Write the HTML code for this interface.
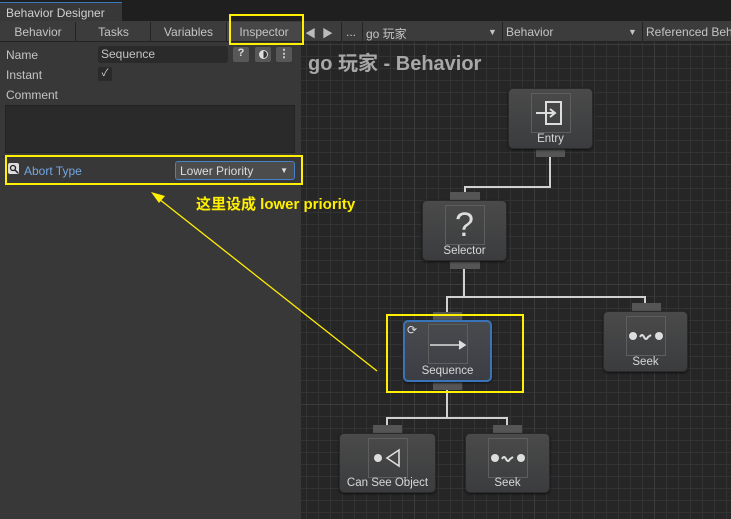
<!DOCTYPE html><html><head><meta charset="utf-8"><style>
*{margin:0;padding:0;box-sizing:border-box}
body{width:731px;height:519px;overflow:hidden;background:#1f1f1f;font-family:"Liberation Sans","Noto Sans CJK SC",sans-serif;font-size:12px;color:#c4c4c4;position:relative}
.a{position:absolute}
.grid{left:301px;top:42px;width:430px;height:477px;background-color:#262626;
background-image:linear-gradient(#3c3c3c 1px,transparent 1px),linear-gradient(90deg,#3c3c3c 1px,transparent 1px),linear-gradient(#333 1px,transparent 1px),linear-gradient(90deg,#333 1px,transparent 1px);
background-size:120px 120px,120px 120px,12px 12px,12px 12px;background-position:-7px 2px,-7px 2px,-7px 2px,-7px 2px}
.node{position:absolute;border-radius:5px;background:linear-gradient(#4a4a4a,#3b3c3e);border:1px solid #2a2a2a;box-shadow:0 1px 2px #111}
.node .ib{position:absolute;left:50%;top:4px;width:40px;height:40px;margin-left:-20px;border:1px solid #5e5e5e}
.node .lb{position:absolute;left:0;right:0;bottom:3px;text-align:center;font-size:11.5px;color:#d8d8d8}
.tab{position:absolute;background:#555;height:8px}
.ln{position:absolute;background:#d0d0d0}
.yb{position:absolute;border:2px solid #ffef00}
</style></head><body>
<div class="a" style="left:0;top:0;width:731px;height:21px;background:#1f1f1f"></div>
<div class="a" style="left:0;top:2px;width:122px;height:19px;background:#383838;border-top:1px solid #3a79bb;padding:3px 6px;font-size:12px;color:#d0d0d0">Behavior Designer</div>
<div class="a" style="left:0;top:21px;width:301px;height:498px;background:#383838"></div>
<div class="a" style="left:0;top:21px;width:731px;height:21px;background:#3c3c3c;border-bottom:1px solid #232323"></div>
<div class="a" style="left:0;top:25px;width:76px;text-align:center">Behavior</div>
<div class="a" style="left:75px;top:22px;width:1px;height:19px;background:#232323"></div>
<div class="a" style="left:76px;top:25px;width:75px;text-align:center">Tasks</div>
<div class="a" style="left:150px;top:22px;width:1px;height:19px;background:#232323"></div>
<div class="a" style="left:151px;top:25px;width:75px;text-align:center">Variables</div>
<div class="a" style="left:226px;top:22px;width:1px;height:19px;background:#232323"></div>
<div class="a" style="left:227px;top:22px;width:74px;height:19px;background:#474747;text-align:center;padding-top:3px">Inspector</div>
<div class="a" style="left:305px;top:25px;font-size:11px;color:#bbb">◀</div>
<div class="a" style="left:322px;top:25px;font-size:11px;color:#bbb">▶</div>
<div class="a" style="left:341px;top:22px;width:1px;height:19px;background:#232323"></div>
<div class="a" style="left:346px;top:25px">...</div>
<div class="a" style="left:362px;top:22px;width:1px;height:19px;background:#232323"></div>
<div class="a" style="left:366px;top:25px">go 玩家</div>
<div class="a" style="left:488px;top:27px;font-size:9px">▼</div>
<div class="a" style="left:502px;top:22px;width:1px;height:19px;background:#232323"></div>
<div class="a" style="left:506px;top:25px">Behavior</div>
<div class="a" style="left:628px;top:27px;font-size:9px">▼</div>
<div class="a" style="left:642px;top:22px;width:1px;height:19px;background:#232323"></div>
<div class="a" style="left:646px;top:25px;white-space:nowrap">Referenced Behavior</div>

<div class="a" style="left:6px;top:48px">Name</div>
<div class="a" style="left:98px;top:46px;width:130px;height:17px;background:#2a2a2a;border-radius:3px;padding:1px 3px">Sequence</div>
<div class="a" style="left:233px;top:47px;width:16px;height:15px;background:#585858;border-radius:2px;text-align:center;font-weight:bold;color:#ddd;font-size:11px">?</div>
<div class="a" style="left:255px;top:47px;width:16px;height:15px;background:#585858;border-radius:2px"><div style="margin:3px auto;width:9px;height:9px;border-radius:50%;background:linear-gradient(90deg,#ddd 50%,#333 50%);border:1px solid #ddd"></div></div>
<div class="a" style="left:276px;top:47px;width:16px;height:15px;background:#585858;border-radius:2px;text-align:center;font-weight:bold;color:#ddd;font-size:11px">⋮</div>
<div class="a" style="left:6px;top:68px">Instant</div>
<div class="a" style="left:98px;top:67px;width:14px;height:14px;background:#2a2a2a;border-radius:2px;font-size:10px;text-align:center;color:#ddd;line-height:14px">✓</div>
<div class="a" style="left:6px;top:88px">Comment</div>
<div class="a" style="left:5px;top:105px;width:290px;height:48px;background:#2a2a2a;border:1px solid #222"></div>
<div class="a" style="left:2px;top:156px;width:296px;height:1px;background:#2a2a2a"></div>
<div class="a" style="left:8px;top:163px;width:11px;height:11px;background:#ddd;border-radius:2px"><svg width="11" height="11"><circle cx="5" cy="5" r="2.5" fill="none" stroke="#222" stroke-width="1.3"/><path d="M7 7l3 3" stroke="#222" stroke-width="1.5"/></svg></div>
<div class="a" style="left:24px;top:164px;color:#74a5e2">Abort Type</div>
<div class="a" style="left:175px;top:161px;width:120px;height:19px;background:#4c4c4c;border:1px solid #4a80c4;border-radius:3px;padding:2px 4px;color:#ddd">Lower Priority<span style="position:absolute;right:6px;top:4px;font-size:8px">▼</span></div>

<div class="a grid"></div>
<div class="a" style="left:308px;top:47px;font-size:20px;font-weight:bold;color:#a8a8a8">go 玩家 - Behavior</div>

<div class="ln" style="left:549px;top:157px;width:2px;height:30px"></div>
<div class="ln" style="left:464px;top:186px;width:87px;height:2px"></div>
<div class="ln" style="left:464px;top:186px;width:2px;height:7px"></div>
<div class="ln" style="left:463px;top:269px;width:2px;height:29px"></div>
<div class="ln" style="left:446px;top:296px;width:200px;height:2px"></div>
<div class="ln" style="left:446px;top:296px;width:2px;height:17px"></div>
<div class="ln" style="left:644px;top:296px;width:2px;height:8px"></div>
<div class="ln" style="left:446px;top:390px;width:2px;height:29px"></div>
<div class="ln" style="left:386px;top:417px;width:122px;height:2px"></div>
<div class="ln" style="left:386px;top:417px;width:2px;height:8px"></div>
<div class="ln" style="left:506px;top:417px;width:2px;height:8px"></div>

<div class="tab" style="left:536px;top:149px;width:29px"></div>
<div class="node" style="left:508px;top:88px;width:85px;height:61px"><div class="ib"><svg width="38" height="38"><rect x="14" y="8" width="15" height="22" fill="none" stroke="#ddd" stroke-width="2"/><path d="M4 19H23M18 15l5 4-5 4" fill="none" stroke="#ddd" stroke-width="2"/></svg></div><div class="lb">Entry</div></div>
<div class="tab" style="left:450px;top:192px;width:30px"></div>
<div class="tab" style="left:450px;top:261px;width:30px"></div>
<div class="node" style="left:422px;top:200px;width:85px;height:61px"><div class="ib" style="text-align:center;font-size:34px;line-height:38px;color:#ddd">?</div><div class="lb">Selector</div></div>
<div class="tab" style="left:433px;top:312px;width:29px"></div>
<div class="tab" style="left:433px;top:382px;width:29px"></div>
<div class="node" style="left:403px;top:320px;width:89px;height:62px;border:2px solid #3a74b8;background:linear-gradient(#484a4e,#3b3e44)"><div class="ib" style="top:2px"><svg width="38" height="38"><path d="M1 20H36M30 16l6 4-6 4" fill="#ddd" stroke="#ddd" stroke-width="1.5"/></svg></div><div class="lb" style="bottom:3px">Sequence</div><div style="position:absolute;left:2px;top:1px;font-size:12px;color:#ddd">⟳</div></div>
<div class="tab" style="left:632px;top:303px;width:29px"></div>
<div class="node" style="left:603px;top:311px;width:85px;height:61px"><div class="ib"><svg width="38" height="38"><circle cx="6" cy="19" r="4" fill="#ddd"/><circle cx="32" cy="19" r="4" fill="#ddd"/><path d="M13 20q2-4 4 0t4 0l3-2" fill="none" stroke="#ddd" stroke-width="2"/></svg></div><div class="lb">Seek</div></div>
<div class="tab" style="left:373px;top:425px;width:29px"></div>
<div class="node" style="left:339px;top:433px;width:97px;height:60px"><div class="ib"><svg width="38" height="38"><circle cx="9" cy="19" r="4" fill="#ddd"/><path d="M30 11L18 19L30 27Z" fill="none" stroke="#ddd" stroke-width="1.6"/></svg></div><div class="lb">Can See Object</div></div>
<div class="tab" style="left:493px;top:425px;width:29px"></div>
<div class="node" style="left:465px;top:433px;width:85px;height:60px"><div class="ib"><svg width="38" height="38"><circle cx="6" cy="19" r="4" fill="#ddd"/><circle cx="32" cy="19" r="4" fill="#ddd"/><path d="M13 20q2-4 4 0t4 0l3-2" fill="none" stroke="#ddd" stroke-width="2"/></svg></div><div class="lb">Seek</div></div>

<div class="yb" style="left:229px;top:14px;width:75px;height:31px"></div>
<div class="yb" style="left:5px;top:155px;width:298px;height:30px"></div>
<div class="yb" style="left:386px;top:314px;width:138px;height:79px"></div>
<div class="a" style="left:196px;top:193px;font-size:15px;font-weight:bold;color:#ffef00;white-space:nowrap">这里设成 lower priority</div>
<svg class="a" style="left:0;top:0" width="731" height="519"><path d="M377 371L154 195" stroke="#ffef00" stroke-width="1.3"/><path d="M151 192l14 4-6 7z" fill="#ffef00"/></svg>
</body></html>
